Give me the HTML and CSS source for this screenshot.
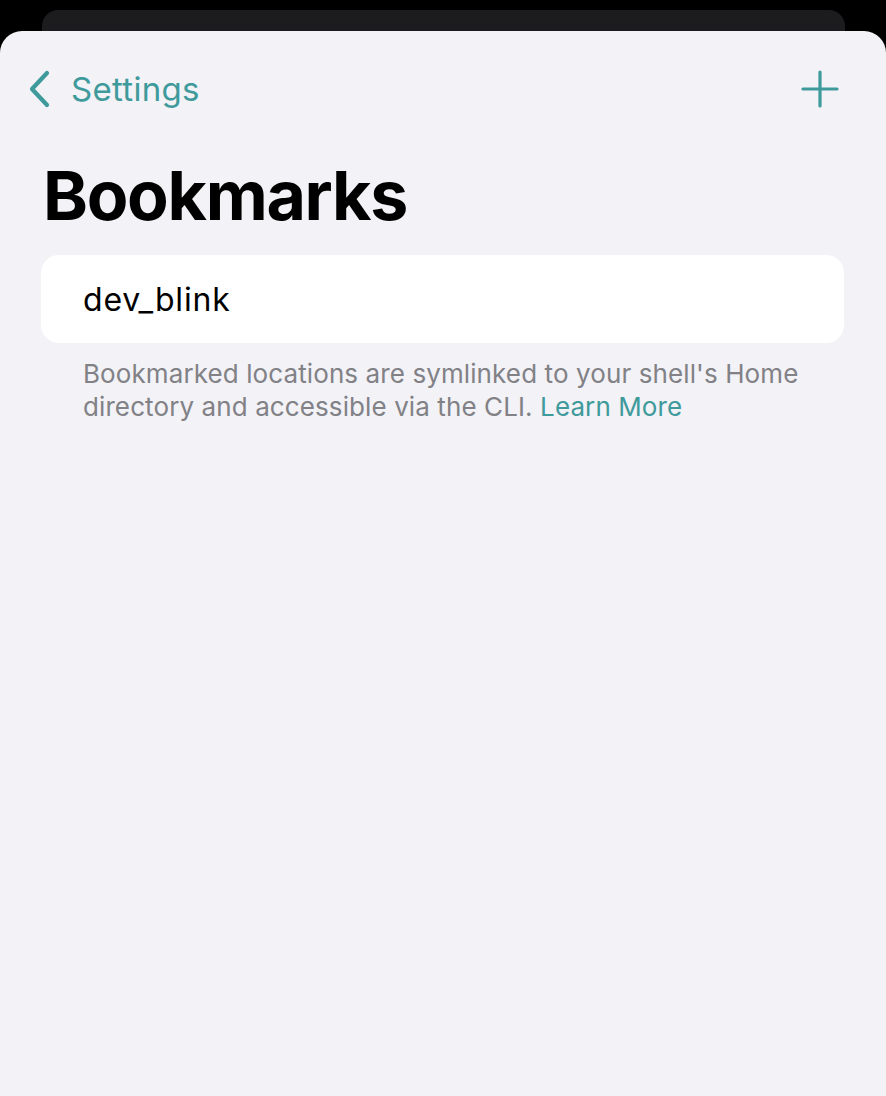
FILE: index.html
```html
<!DOCTYPE html>
<html>
<head>
<meta charset="utf-8">
<link rel="stylesheet" href="styles.css">
</head>
<body>
<div class="screen">
  <div class="behind"></div>
  <div class="sheet">
    <div class="nav">
      <div class="back">
        <svg class="chev" width="26" height="38" viewBox="0 0 26 38"><path d="M21 3 L6 19 L21 35" fill="none" stroke="#3f9a9b" stroke-width="4.2" stroke-linecap="round" stroke-linejoin="round"/></svg>
        <span class="back-label">Settings</span>
      </div>
      <svg class="plus" width="40" height="40" viewBox="0 0 40 40"><path d="M20 3 V37 M3 20 H37" fill="none" stroke="#3f9a9b" stroke-width="3.2" stroke-linecap="round"/></svg>
    </div>
    <h1 class="title">Bookmarks</h1>
    <div class="group">
      <div class="row">dev_blink</div>
    </div>
    <p class="footer">Bookmarked locations are symlinked to your shell's Home directory and accessible via the CLI. <span class="link">Learn More</span></p>
  </div>
</div>
</body>
</html>
```
FILE: styles.css
```css
html, body {
  margin: 0;
  padding: 0;
  background: #000;
}
.screen {
  width: 886px;
  height: 1096px;
  background: #000;
  display: flex;
  flex-direction: column;
  overflow: hidden;
  font-family: Inter, "Liberation Sans", sans-serif;
}
.behind {
  margin: 10px 41px 0 42px;
  height: 21px;
  background: #1c1c1e;
  border-radius: 16px 16px 0 0;
  flex: none;
}
.sheet {
  flex: 1;
  background: #f2f2f7;
  border-radius: 22px 22px 0 0;
  padding: 0 42px 0 41px;
}
.nav {
  height: 116px;
  display: flex;
  align-items: center;
  justify-content: space-between;
  margin-left: -15px;
}
.back {
  display: flex;
  align-items: center;
  gap: 19px;
}
.chev {
  display: block;
}
.back-label {
  font-size: 33px;
  color: #3f9a9b;
  letter-spacing: 0.3px;
}
.plus {
  display: block;
  margin-right: 4px;
}
.title {
  margin: 8px 0 0 2px;
  font-size: 68px;
  font-weight: 700;
  letter-spacing: -1.3px;
  line-height: 80px;
  color: #000;
}
.group {
  margin-top: 20px;
  background: #fff;
  border-radius: 18px;
}
.row {
  height: 88px;
  display: flex;
  align-items: center;
  padding-left: 42px;
  font-size: 32px;
  letter-spacing: 0.8px;
  color: #000;
}
.footer {
  margin: 14px 0 0 42px;
  font-size: 26px;
  line-height: 33px;
  letter-spacing: 0.1px;
  color: #818186;
}
.link {
  color: #3f9a9b;
}
```
